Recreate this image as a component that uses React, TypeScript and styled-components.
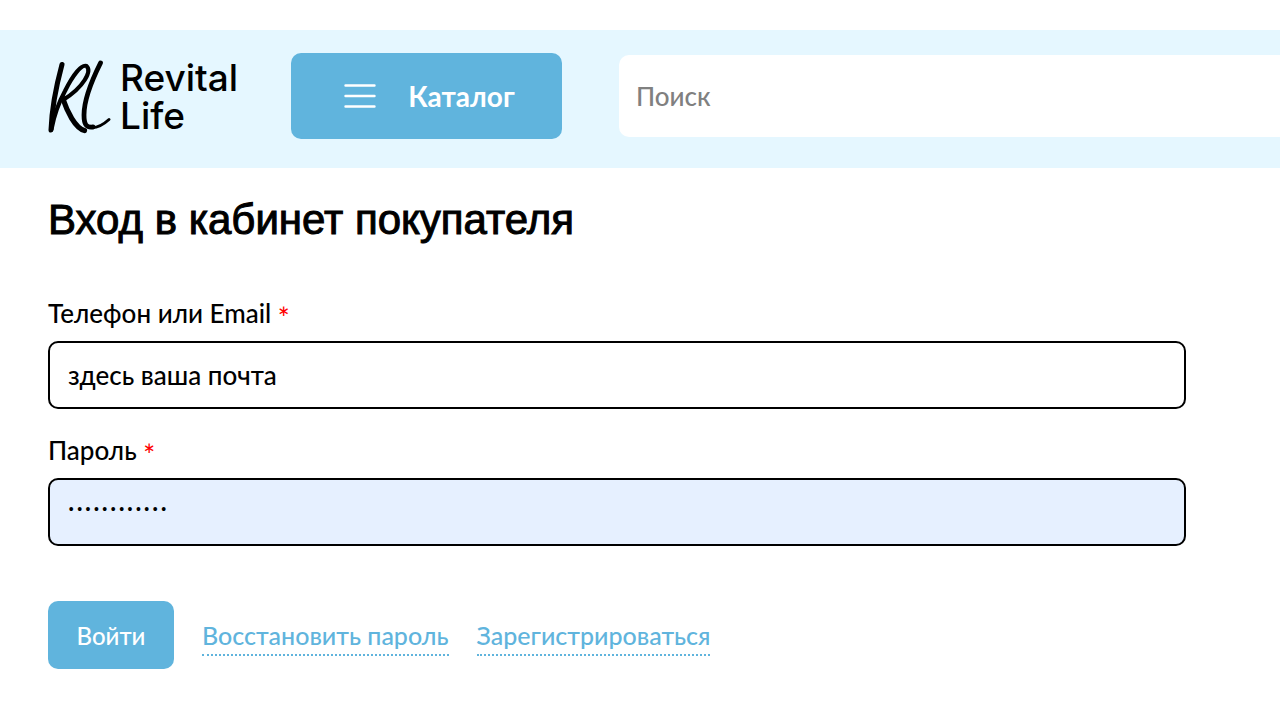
import React from 'react';
import styled, { createGlobalStyle } from 'styled-components';

const GlobalStyle = createGlobalStyle`
  *, *::before, *::after { box-sizing: border-box; }
  body {
    margin: 0;
    background: #fff;
    color: #000;
    font-family: Lato, "Noto Sans", sans-serif;
    font-size: 26px;
    font-weight: 500;
    line-height: 34px;
    overflow-x: hidden;
  }
  input, button { font: inherit; }
`;

const Header = styled.header`
  display: flex;
  align-items: center;
  margin-top: 30px;
  padding: 23px 0 29px 48px;
  background: #e5f7ff;
`;

const Logo = styled.a`
  display: flex;
  align-items: center;
  gap: 8px;
  width: 243px;
  flex: none;
  color: #000;
  text-decoration: none;
`;

const LogoText = styled.span`
  padding-top: 2px;
  font-family: Inter, sans-serif;
  font-size: 37px;
  font-weight: 500;
  line-height: 38px;
`;

const CatalogButton = styled.button`
  display: flex;
  align-items: center;
  justify-content: center;
  gap: 32px;
  flex: none;
  width: 271px;
  height: 86px;
  margin-right: 57px;
  padding: 0 0 0 6px;
  border: 0;
  border-radius: 10px;
  background: #60b4dd;
  color: #fff;
  font-size: 28px;
  font-weight: 700;
`;

const Search = styled.input`
  flex: 1;
  min-width: 0;
  height: 82px;
  padding: 0 17px;
  border: 0;
  border-radius: 10px 0 0 10px;
  background: #fff;
  &::placeholder { color: #808080; opacity: 1; }
`;

const Main = styled.main`
  padding: 28px 94px 48px 48px;
`;

const Title = styled.h1`
  margin: 0 0 52px;
  font-family: "Liberation Sans", Arial, sans-serif;
  font-size: 42px;
  font-weight: 400;
  line-height: 48px;
  -webkit-text-stroke: 1px #000;
`;

const Field = styled.div`
  display: flex;
  flex-direction: column;
  gap: 10px;
  margin-bottom: 24px;
`;

const Required = styled.span`
  color: #f00;
  font-size: 28px;
  line-height: 1;
  vertical-align: -5px;
`;

const Input = styled.input<{ $filled?: boolean }>`
  width: 100%;
  height: 68px;
  padding: 0 18px;
  border: 2px solid #000;
  border-radius: 10px;
  background: ${(p) => (p.$filled ? '#e6f0ff' : '#fff')};
  color: #000;
`;

const PasswordInput = styled(Input)`
  padding: 0 17px 4px;
  font-family: "Liberation Mono", monospace;
  font-size: 14px;
`;

const Actions = styled.div`
  display: flex;
  align-items: center;
  gap: 28px;
  margin-top: 55px;
`;

const Submit = styled.button`
  width: 126px;
  height: 68px;
  padding: 2px 0 0;
  border: 0;
  border-radius: 10px;
  background: #60b4dd;
  color: #fff;
  font-size: 24px;
`;

const TextLink = styled.a`
  padding: 4px 0 2px;
  border-bottom: 2px dotted #60b4dd;
  color: #60b4dd;
  font-size: 25px;
  text-decoration: none;
`;

export default function App() {
  return (
    <>
      <GlobalStyle />
      <Header>
        <Logo href="#" aria-label="Revital Life">
          <svg width="64" height="76" viewBox="0 0 64 76" fill="none" stroke="#000" strokeLinecap="round" strokeLinejoin="round">
            <path d="M14 6.5C9 25 4 45 3 72" strokeWidth="5" />
            <path d="M3.5 71C6 58 11 44 17 33C24 19 33 6 38.5 8C44 13 36 29 15 42" strokeWidth="4.2" />
            <path d="M15 41C19 53 27 70 36.5 72.5" strokeWidth="5.2" />
            <path d="M52.5 5C45 20 36 42 36 57C36 66 38 70 45 69" strokeWidth="4.8" />
            <path d="M40 69C47 71 55 67 61 61.5" strokeWidth="3" />
          </svg>
          <LogoText>Revital<br />Life</LogoText>
        </Logo>
        <CatalogButton type="button">
          <svg width="32" height="26" viewBox="0 0 32 26" stroke="#fff" strokeWidth="2.4" strokeLinecap="round">
            <path d="M1.5 2.5H30.5M1.5 13H30.5M1.5 23.5H30.5" />
          </svg>
          Каталог
        </CatalogButton>
        <Search type="search" placeholder="Поиск" aria-label="Поиск" />
      </Header>
      <Main>
        <Title>Вход в кабинет покупателя</Title>
        <form>
          <Field>
            <label htmlFor="login">Телефон или Email <Required>*</Required></label>
            <Input id="login" type="text" defaultValue="здесь ваша почта" />
          </Field>
          <Field>
            <label htmlFor="password">Пароль <Required>*</Required></label>
            <PasswordInput id="password" type="password" defaultValue="password1234" $filled />
          </Field>
          <Actions>
            <Submit type="submit">Войти</Submit>
            <TextLink href="#">Восстановить пароль</TextLink>
            <TextLink href="#">Зарегистрироваться</TextLink>
          </Actions>
        </form>
      </Main>
    </>
  );
}
